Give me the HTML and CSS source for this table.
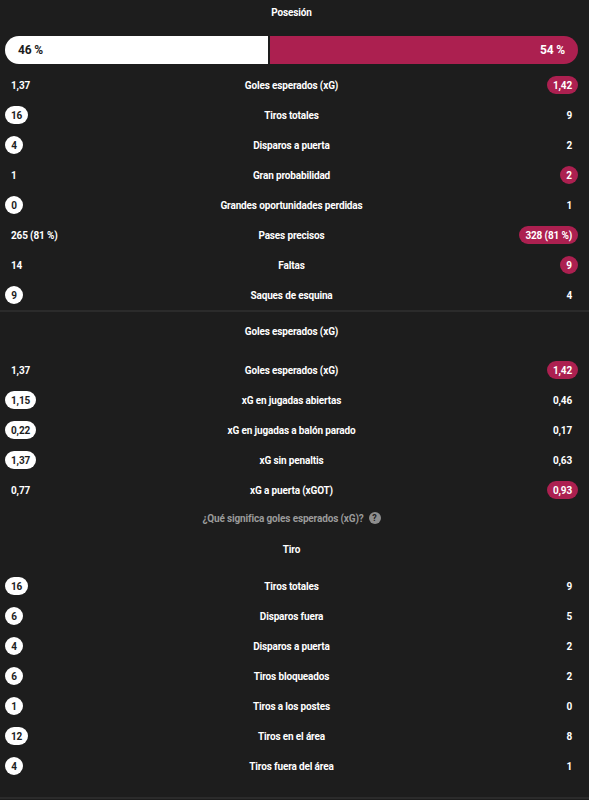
FILE: index.html
```html
<!DOCTYPE html>
<html lang="es">
<head>
<meta charset="utf-8">
<link rel="stylesheet" href="styles.css">
</head>
<body>
<div class="page">
  <section class="section first">
    <div class="title">Posesión</div>
    <div class="poss">
      <div class="poss-home" style="width:46%">46 %</div>
      <div class="poss-away" style="width:54%">54 %</div>
    </div>
    <div class="rows">
      <div class="row"><div class="l"><span class="v">1,37</span></div><div class="c">Goles esperados (xG)</div><div class="r"><span class="v pill red">1,42</span></div></div>
      <div class="row"><div class="l"><span class="v pill white">16</span></div><div class="c">Tiros totales</div><div class="r"><span class="v">9</span></div></div>
      <div class="row"><div class="l"><span class="v pill white circle">4</span></div><div class="c">Disparos a puerta</div><div class="r"><span class="v">2</span></div></div>
      <div class="row"><div class="l"><span class="v">1</span></div><div class="c">Gran probabilidad</div><div class="r"><span class="v pill red circle">2</span></div></div>
      <div class="row"><div class="l"><span class="v pill white circle">0</span></div><div class="c">Grandes oportunidades perdidas</div><div class="r"><span class="v">1</span></div></div>
      <div class="row"><div class="l"><span class="v">265 (81 %)</span></div><div class="c">Pases precisos</div><div class="r"><span class="v pill red">328 (81 %)</span></div></div>
      <div class="row"><div class="l"><span class="v">14</span></div><div class="c">Faltas</div><div class="r"><span class="v pill red circle">9</span></div></div>
      <div class="row"><div class="l"><span class="v pill white circle">9</span></div><div class="c">Saques de esquina</div><div class="r"><span class="v">4</span></div></div>
    </div>
  </section>
  <section class="section second">
    <div class="title">Goles esperados (xG)</div>
    <div class="rows">
      <div class="row"><div class="l"><span class="v">1,37</span></div><div class="c">Goles esperados (xG)</div><div class="r"><span class="v pill red">1,42</span></div></div>
      <div class="row"><div class="l"><span class="v pill white">1,15</span></div><div class="c">xG en jugadas abiertas</div><div class="r"><span class="v">0,46</span></div></div>
      <div class="row"><div class="l"><span class="v pill white">0,22</span></div><div class="c">xG en jugadas a balón parado</div><div class="r"><span class="v">0,17</span></div></div>
      <div class="row"><div class="l"><span class="v pill white">1,37</span></div><div class="c">xG sin penaltis</div><div class="r"><span class="v">0,63</span></div></div>
      <div class="row"><div class="l"><span class="v">0,77</span></div><div class="c">xG a puerta (xGOT)</div><div class="r"><span class="v pill red">0,93</span></div></div>
    </div>
    <div class="link">¿Qué significa goles esperados (xG)? <span class="help">?</span></div>
    <div class="title tiro">Tiro</div>
    <div class="rows">
      <div class="row"><div class="l"><span class="v pill white">16</span></div><div class="c">Tiros totales</div><div class="r"><span class="v">9</span></div></div>
      <div class="row"><div class="l"><span class="v pill white circle">6</span></div><div class="c">Disparos fuera</div><div class="r"><span class="v">5</span></div></div>
      <div class="row"><div class="l"><span class="v pill white circle">4</span></div><div class="c">Disparos a puerta</div><div class="r"><span class="v">2</span></div></div>
      <div class="row"><div class="l"><span class="v pill white circle">6</span></div><div class="c">Tiros bloqueados</div><div class="r"><span class="v">2</span></div></div>
      <div class="row"><div class="l"><span class="v pill white circle">1</span></div><div class="c">Tiros a los postes</div><div class="r"><span class="v">0</span></div></div>
      <div class="row"><div class="l"><span class="v pill white">12</span></div><div class="c">Tiros en el área</div><div class="r"><span class="v">8</span></div></div>
      <div class="row"><div class="l"><span class="v pill white circle">4</span></div><div class="c">Tiros fuera del área</div><div class="r"><span class="v">1</span></div></div>
    </div>
  </section>
</div>
</body>
</html>
```
FILE: styles.css
```css
html, body {
  margin: 0;
  padding: 0;
  background: #1d1d1d;
}
body {
  font-family: Roboto, "Noto Sans", sans-serif;
  color: #fff;
  font-size: 10px;
  font-weight: 700;
  letter-spacing: -0.15px;
  height: 800px;
  overflow: hidden;
}
.page {
  width: 589px;
}
.section {
  padding: 0 11px 0 5px;
  border-bottom: 2px solid #2b2b2b;
}
.section.second {
  padding-top: 7px;
  padding-bottom: 16px;
}
.title {
  height: 26px;
  line-height: 26px;
  text-align: center;
  margin-bottom: 10px;
}
.title.tiro {
  margin-top: 6px;
  margin-bottom: 8px;
}
.poss {
  display: flex;
  gap: 2px;
  height: 28px;
  font-size: 12px;
  margin-bottom: 6px;
}
.poss-home {
  background: #fff;
  color: #1d1d1d;
  border-radius: 14px 0 0 14px;
  display: flex;
  align-items: center;
  padding-left: 13px;
  box-sizing: border-box;
}
.poss-away {
  background: #ac2050;
  color: #fff;
  border-radius: 0 14px 14px 0;
  display: flex;
  align-items: center;
  justify-content: flex-end;
  padding-right: 13px;
  box-sizing: border-box;
}
.row {
  display: grid;
  grid-template-columns: 1fr auto 1fr;
  align-items: center;
  height: 30px;
}
.l { display: flex; justify-content: flex-start; }
.r { display: flex; justify-content: flex-end; }
.c { text-align: center; white-space: nowrap; }
.v {
  display: inline-flex;
  align-items: center;
  justify-content: center;
  height: 18px;
  padding: 0 6px;
  border-radius: 9px;
  box-sizing: border-box;
  white-space: nowrap;
}
.pill.white {
  background: #fff;
  color: #1d1d1d;
}
.pill.red {
  background: #ac2050;
  color: #fff;
}
.pill.circle {
  width: 18px;
  padding: 0;
}
.link {
  height: 26px;
  display: flex;
  align-items: center;
  justify-content: center;
  gap: 5px;
  color: #9a9a9a;
}
.help {
  width: 12px;
  height: 12px;
  border-radius: 50%;
  background: #8e8e8e;
  color: #1d1d1d;
  font-size: 9px;
  font-weight: 700;
  display: inline-flex;
  align-items: center;
  justify-content: center;
  letter-spacing: 0;
}
```
